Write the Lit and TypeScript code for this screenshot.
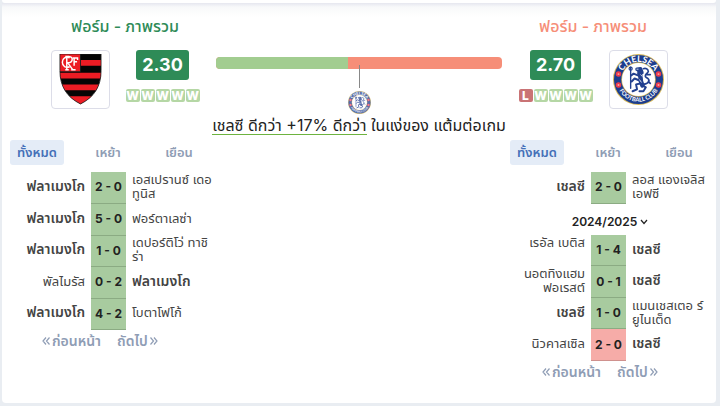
import { LitElement, html, css, svg, nothing } from "lit";
import { customElement, property } from "lit/decorators.js";
import { classMap } from "lit/directives/class-map.js";
import { styleMap } from "lit/directives/style-map.js";

interface Match {
  home: string;
  score: string;
  away: string;
  own: "home" | "away";
  lost?: boolean;
  top?: boolean;
}

const FLAMENGO = "ฟลาเมงโก";
const CHELSEA = "เชลซี";

const flamengoMatches: Match[] = [
  { home: FLAMENGO, score: "2 - 0", away: "เอสเปรานซ์ เดอ\nทูนิส", own: "home" },
  { home: FLAMENGO, score: "5 - 0", away: "ฟอร์ตาเลซ่า", own: "home" },
  { home: FLAMENGO, score: "1 - 0", away: "เดปอร์ติโว่ ทาชิ\nร่า", own: "home" },
  { home: "พัลไมรัส", score: "0 - 2", away: FLAMENGO, own: "away" },
  { home: FLAMENGO, score: "4 - 2", away: "โบตาโฟโก้", own: "home" },
];

const chelseaRecent: Match[] = [
  { home: CHELSEA, score: "2 - 0", away: "ลอส แองเจลิส\nเอฟซี", own: "home" },
];

const chelseaSeason: Match[] = [
  { home: "เรอัล เบติส", score: "1 - 4", away: CHELSEA, own: "away", top: true },
  { home: "นอตทิงแฮม\nฟอเรสต์", score: "0 - 1", away: CHELSEA, own: "away" },
  { home: CHELSEA, score: "1 - 0", away: "แมนเชสเตอ ร์\nยูไนเต็ด", own: "home" },
  { home: "นิวคาสเซิล", score: "2 - 0", away: CHELSEA, own: "away", lost: true },
];

const base = css`
  * {
    box-sizing: border-box;
  }
  button {
    font: inherit;
    color: inherit;
    background: none;
    border: 0;
    padding: 0;
    cursor: pointer;
  }
`;

@customElement("club-crest")
export class ClubCrest extends LitElement {
  @property() club = "";

  static styles = css`
    :host {
      display: block;
    }
    svg {
      display: block;
      width: 100%;
      height: 100%;
    }
    .ring {
      font: 700 9px Lato, sans-serif;
      fill: #fff;
    }
    .small {
      font-size: 6px;
    }
  `;

  private flamengo() {
    return html`<svg viewBox="0 0 50 52" role="img" aria-label=${FLAMENGO}>
      <defs>
        <clipPath id="shield">
          <path d="M4 0H46V17C46 33 39 44 25 51C11 44 4 33 4 17Z" />
        </clipPath>
      </defs>
      <g clip-path="url(#shield)">
        <path fill="#050505" d="M0 0H50V52H0Z" />
        <path fill="#ec1c24" d="M25 6H46V12H25ZM0 19H50V25H0ZM0 31H50V37H0ZM0 43H50V52H0ZM4 0H24.500V18H4Z" />
      </g>
      <path fill="none" stroke="#222" stroke-width=".8" d="M4 0H46V17C46 33 39 44 25 51C11 44 4 33 4 17ZM25 0V18H4" />
      <g fill="none" stroke="#fff" stroke-width="1.500">
        <path d="M14 4C10 2 6.500 4.500 6.500 8.500S10 14.500 14 13" />
        <path d="M11 2.500V16M9.500 2.500H13Q17 3 16.500 6T12 9L17 16M9.500 16H13M15.500 16H20" />
        <path d="M17 4H22V6M18.500 4V12M18.500 8H21.500" />
      </g>
    </svg>`;
  }

  private chelsea() {
    return html`<svg viewBox="0 0 52 52" role="img" aria-label=${CHELSEA}>
      <defs>
        <path id="upper" d="M8 26A18 18 0 0 1 44 26" />
        <path id="lower" d="M3.400 26A22.600 22.600 0 0 0 48.600 26" />
      </defs>
      <circle cx="26" cy="26" r="26" fill="#d6b85a" />
      <circle cx="26" cy="26" r="25" fill="#1c3d8e" />
      <circle cx="26" cy="26" r="17.600" fill="#d6b85a" />
      <circle cx="26" cy="26" r="16.800" fill="#fff" />
      <text class="ring" text-anchor="middle"><textPath href="#upper" startOffset="50%">CHELSEA</textPath></text>
      <text class="ring small" text-anchor="middle"><textPath href="#lower" startOffset="50%">FOOTBALL CLUB</textPath></text>
      ${[[5.6, 20.5], [5.6, 31.5], [46.4, 20.5], [46.4, 31.5]].map(
        ([x, y]) => svg`<circle cx=${x} cy=${y} r="2.800" fill="#ee3b4b"/><circle cx=${x} cy=${y} r="1" fill="#f7a3a3"/>`,
      )}
      <g fill="none" stroke="#22408f" stroke-linecap="round" stroke-linejoin="round">
        <path stroke-width="1.400" d="M18 16V35M18 13.500V18" />
        <circle cx="18" cy="15" r="1.600" stroke-width="1.200" />
        <path stroke-width="4.600" d="M26.500 18C28 22 28.500 25 28.500 28L30 32" />
        <path stroke-width="3.600" d="M24.500 15.500L28 15L29.500 19" />
        <path stroke-width="2" d="M26 22L21 20L18.500 22M27 27L22 25L19 28M28 30L23.500 31L24.500 36L20 38M30 32L33.500 34L31 38L27 38" />
        <path stroke-width="1.700" d="M31 31C38 30 38 26 34 24C31 22 35 20 36 18C36 15 33 14 31 15M34 21L38 21M36 28L38 30" />
      </g>
      <path d="M24 15.500H26M25 18.500L22.500 18M28 21L30 23M27 26L29 29" stroke="#fff" stroke-width=".8" />
    </svg>`;
  }

  render() {
    return this.club === "chelsea" ? this.chelsea() : this.flamengo();
  }
}

@customElement("form-summary")
export class FormSummary extends LitElement {
  @property() club = "";
  @property() points = "";
  @property() form = "";
  @property({ type: Boolean, reflect: true }) away = false;

  static styles = [
    base,
    css`
      :host {
        display: block;
        color: #2e8b57;
      }
      :host([away]) h2 {
        color: #f68e78;
      }
      :host([away]) .row {
        flex-direction: row-reverse;
      }
      h2 {
        margin: 0;
        font-size: 16px;
        line-height: 20px;
        font-weight: 500;
        text-align: center;
      }
      .row {
        display: flex;
        justify-content: center;
        gap: 16px;
        margin-top: 14px;
      }
      .crest {
        width: 59px;
        height: 59px;
        padding: 3px;
        border: 1px solid #dcdde8;
        border-radius: 4px;
        background: #fff;
      }
      club-crest {
        height: 51px;
      }
      .stats {
        display: flex;
        flex-direction: column;
        align-items: center;
        gap: 9px;
      }
      .points {
        padding: 0 6px;
        border-radius: 3px;
        background: #2e8b57;
        color: #fff;
        font-size: 18px;
        line-height: 30px;
        font-weight: 700;
      }
      .form {
        display: flex;
        gap: 1px;
      }
      .res {
        display: flex;
        justify-content: center;
        width: 14px;
        height: 13px;
        border-radius: 2px;
        background: #b5d7a5;
        color: #fff;
        font-size: 12px;
        line-height: 13px;
        font-weight: 800;
      }
      .loss {
        background: #c97375;
      }
    `,
  ];

  render() {
    return html`
      <h2>ฟอร์ม - ภาพรวม</h2>
      <div class="row">
        <div class="crest"><club-crest club=${this.club}></club-crest></div>
        <div class="stats">
          <div class="points">${this.points}</div>
          <div class="form">
            ${[...this.form].map((r) => html`<span class=${classMap({ res: true, loss: r === "L" })}>${r}</span>`)}
          </div>
        </div>
      </div>
    `;
  }
}

@customElement("match-list")
export class MatchList extends LitElement {
  @property({ attribute: false }) recent: Match[] = [];
  @property({ attribute: false }) older: Match[] = [];
  @property() season = "";

  static styles = [
    base,
    css`
      :host {
        display: block;
      }
      .tabs {
        display: flex;
        gap: 17px;
        color: #8f9db5;
        font-size: 13px;
        font-weight: 600;
      }
      .tabs button {
        min-width: 54px;
        height: 25px;
        padding: 0 7px;
        border-radius: 3px;
      }
      .tabs .on {
        background: #e4ecf7;
        color: #4470b8;
      }
      table {
        width: 100%;
        margin-top: 7px;
        border-collapse: collapse;
        table-layout: fixed;
        font-size: 13px;
        line-height: 14px;
        color: #444;
      }
      .side {
        width: 81px;
      }
      .mid {
        width: 35px;
      }
      td {
        height: 31px;
        padding: 0 6px 3px;
        white-space: pre;
      }
      tr:nth-child(even) td {
        height: 32px;
      }
      .home {
        text-align: right;
        padding-left: 0;
      }
      .away {
        padding-right: 0;
      }
      .own {
        font-size: 14px;
        font-weight: 600;
      }
      .top {
        vertical-align: top;
      }
      .score {
        padding: 0;
        background: #a8cb9f;
        border-bottom: 1px solid #8bab83;
        color: #222;
        font-size: 12px;
        font-weight: 700;
        text-align: center;
      }
      .lost {
        background: #f6aca8;
        border-color: #cf918e;
      }
      .season {
        display: flex;
        align-items: center;
        gap: 3px;
        margin: 9px auto 0;
        font-size: 12px;
        line-height: 18px;
        font-weight: 600;
        color: #222;
      }
      .season + table {
        margin-top: 4px;
      }
      .pager {
        display: flex;
        gap: 16px;
        margin-top: 2px;
        padding-left: 32px;
        font-size: 14px;
        line-height: 18px;
        font-weight: 600;
        color: #8f9db5;
      }
      .pager button {
        display: flex;
        align-items: center;
        gap: 2px;
      }
      svg {
        display: block;
        fill: none;
        stroke: currentColor;
        stroke-width: 1.2;
      }
    `,
  ];

  private rows(list: Match[]) {
    return html`<table>
      <colgroup>
        <col class="side" />
        <col class="mid" />
        <col />
      </colgroup>
      <tbody>
        ${list.map(
          (m) => html`<tr>
            <td class=${classMap({ home: true, own: m.own === "home", top: !!m.top })}>${m.home}</td>
            <td class=${classMap({ score: true, lost: !!m.lost })}>${m.score}</td>
            <td class=${classMap({ away: true, own: m.own === "away" })}>${m.away}</td>
          </tr>`,
        )}
      </tbody>
    </table>`;
  }

  render() {
    return html`
      <div class="tabs">
        <button class="on">ทั้งหมด</button>
        <button>เหย้า</button>
        <button>เยือน</button>
      </div>
      ${this.rows(this.recent)}
      ${this.season
        ? html`<button class="season">
              ${this.season}
              <svg width="8" height="6" viewBox="0 0 8 6"><path d="M1 1L4 4.500L7 1" /></svg>
            </button>
            ${this.rows(this.older)}`
        : nothing}
      <div class="pager">
        <button>
          <svg width="8" height="8" viewBox="0 0 8 8"><path d="M4 .5L1 4L4 7.500M7.500 .5L4.500 4L7.500 7.500" /></svg>
          ก่อนหน้า
        </button>
        <button>
          ถัดไป
          <svg width="8" height="8" viewBox="0 0 8 8"><path d="M.5 .5L3.500 4L.5 7.500M4 .5L7 4L4 7.500" /></svg>
        </button>
      </div>
    `;
  }
}

@customElement("app-root")
export class AppRoot extends LitElement {
  private homeShare = 46;

  static styles = [
    base,
    css`
      :host {
        display: flex;
        flex-direction: column;
        min-height: 100vh;
        padding: 0 4px 3px 2px;
        background: #e9edf2;
        font-family: Inter, "Noto Sans Thai", Tahoma, "Noto Sans", sans-serif;
        box-sizing: border-box;
      }
      .above {
        height: 3px;
        background: #fff;
        border-radius: 0 0 4px 4px;
      }
      .card {
        flex: 1;
        padding-bottom: 20px;
        border-radius: 0 0 4px 4px;
        background: linear-gradient(#e6e7ef, #f8f9fa 4px, #fff 14px);
      }
      .head {
        display: grid;
        grid-template-columns: 14fr 22fr 14fr;
        padding: 13px 32px 0;
      }
      .compare {
        display: flex;
        flex-direction: column;
        align-items: center;
        min-width: 0;
        padding-top: 41px;
      }
      .bar {
        display: flex;
        width: 100%;
        height: 12px;
        border-radius: 4px;
        overflow: hidden;
        background: #f68e78;
      }
      .share {
        background: #a2cd90;
      }
      .stem {
        width: 1px;
        height: 23px;
        margin-top: -4px;
        background: #888;
        z-index: 1;
      }
      .mini {
        width: 23px;
        height: 23px;
        margin-top: 3px;
        opacity: 0.75;
      }
      .verdict {
        margin: 2px 0 0;
        font-size: 16px;
        line-height: 18px;
        color: #222;
        white-space: nowrap;
      }
      .lead {
        display: inline-block;
        border-bottom: 1px solid #6db33f;
      }
      .lists {
        display: grid;
        grid-template-columns: 2fr 3fr 2fr;
        padding: 5px 6px 0 8px;
      }
      match-list:last-child {
        grid-column: 3;
      }
    `,
  ];

  render() {
    return html`
      <div class="above"></div>
      <main class="card">
        <section class="head">
          <form-summary club="flamengo" points="2.30" form="WWWWW"></form-summary>
          <div class="compare">
            <div class="bar"><div class="share" style=${styleMap({ width: `${this.homeShare}%` })}></div></div>
            <div class="stem"></div>
            <club-crest class="mini" club="chelsea"></club-crest>
            <p class="verdict"><span class="lead">เชลซี ดีกว่า +17% ดีกว่า</span> ในแง่ของ แต้มต่อเกม</p>
          </div>
          <form-summary away club="chelsea" points="2.70" form="LWWWW"></form-summary>
        </section>
        <section class="lists">
          <match-list .recent=${flamengoMatches}></match-list>
          <match-list .recent=${chelseaRecent} season="2024/2025" .older=${chelseaSeason}></match-list>
        </section>
      </main>
    `;
  }
}
